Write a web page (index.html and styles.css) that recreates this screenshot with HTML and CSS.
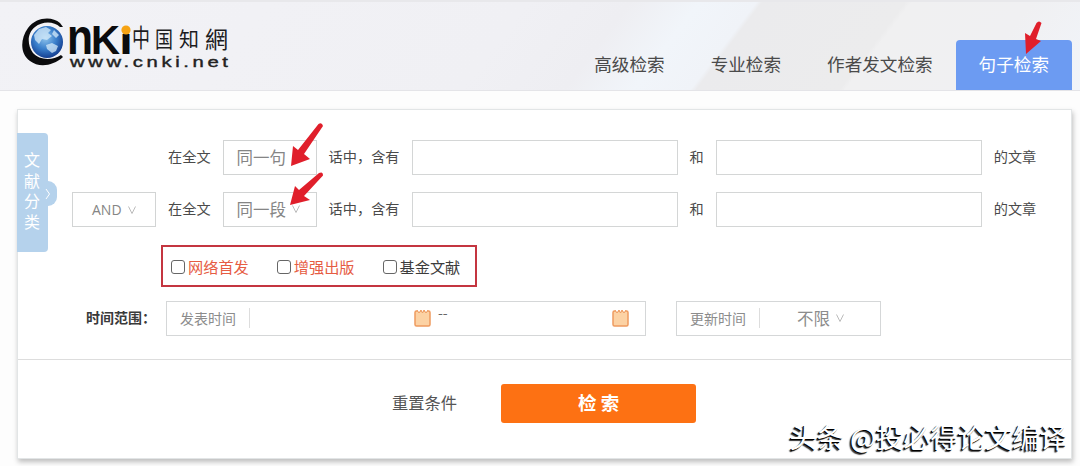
FILE: index.html
```html
<!DOCTYPE html>
<html lang="zh-CN">
<head>
  <meta charset="UTF-8" />
  <meta name="viewport" content="width=device-width, initial-scale=1.0"/>
  <title>句子检索 - 中国知网</title>
  <link rel="stylesheet" href="styles.css">
</head>
<body>
  <header class="header">
    <svg class="logo" width="212" height="52" viewBox="0 0 212 52" role="img" aria-label="中国知网">
      <defs>
        <radialGradient id="globe" cx="45%" cy="38%" r="62%">
          <stop offset="0" stop-color="#8fc4ec"/>
          <stop offset=".55" stop-color="#3a7fcb"/>
          <stop offset="1" stop-color="#153f91"/>
        </radialGradient>
      </defs>
      <path fill="#0b0b0d" d="M41 9L38 5C30-2 14-1 6 10C-2 21-2 36 8 43C17 50 31 48 41 39L39 37C30 43 17 42 11 35C5 27 5 15 13 9C20 3 32 3 38 9Z"/>
      <circle cx="25" cy="24" r="16" fill="url(#globe)"/>
      <path fill="#d5ebf9" opacity=".75" d="M12 17l5-6 7-2 5 3-3 3 4 3-5 4-5-1-3 5-4-4zM24 27l6-2 6 3-2 5-4 2-5-4zM32 12l5 5-3 3-4-4z"/>
      <g class="logo-name">
        <text x="45" y="36" font-size="50" textLength="26" lengthAdjust="spacingAndGlyphs">n</text>
        <text x="69" y="36" font-size="40" textLength="29" lengthAdjust="spacingAndGlyphs">K</text>
        <text x="97" y="36" font-size="36" textLength="14" lengthAdjust="spacingAndGlyphs">ı</text>
      </g>
      <circle cx="104" cy="12" r="4.600" fill="#f6a313"/>
      <g class="logo-cn">
        <text x="110" y="29" font-size="25" textLength="18" lengthAdjust="spacingAndGlyphs">中</text>
        <text x="133" y="29" font-size="22" textLength="18" lengthAdjust="spacingAndGlyphs">国</text>
        <text x="157" y="29" font-size="20">知</text>
        <text x="183" y="30" font-size="23">網</text>
      </g>
      <text class="logo-url" transform="translate(48 49) scale(1.35 1)" textLength="117" lengthAdjust="spacing">www.cnki.net</text>
    </svg>
    <nav class="tabs">
      <a class="tab">高级检索</a>
      <a class="tab">专业检索</a>
      <a class="tab">作者发文检索</a>
      <a class="tab active">句子检索</a>
    </nav>
    <svg class="arrow arrow-tab" width="18" height="36" viewBox="0 0 18 36">
      <path d="M0 13L5 16L11.500 3Q14 0 16.500 3L11 19L16 21L1 34Z"/>
    </svg>
  </header>

  <main class="panel">
    <div class="side-tab">
      <span>文献分类</span>
      <i class="side-knob"><svg width="8" height="12" viewBox="0 0 8 12"><path d="M2 1l3.500 5L2 11"/></svg></i>
    </div>

    <div class="search-rows">
      <div class="row">
        <span class="op-space"></span>
        <span class="word">在全文</span>
        <div class="select scope">同一句<svg class="arrow arrow-row" width="34" height="46" viewBox="0 0 34 46">
          <path d="M3 24L8 28L28.500 2Q32 0 33 4L14 32L20 37L1 44Z"/>
        </svg></div>
        <span class="word">话中，含有</span>
        <input type="text">
        <span class="word">和</span>
        <input type="text">
        <span class="word">的文章</span>
      </div>
      <div class="row">
        <div class="select op">AND<svg class="chev" viewBox="0 0 8 8"><path d="M.5.5L4 7.500L7.500.5"/></svg></div>
        <span class="word">在全文</span>
        <div class="select scope">同一段<svg class="chev" viewBox="0 0 8 8"><path d="M.5.5L4 7.500L7.500.5"/></svg><svg class="arrow arrow-row low" width="34" height="36" viewBox="0 0 34 36">
          <path d="M5 15L9 19L29 2Q33 0 33 4.500L14 25L20 29L0 34Z"/>
        </svg></div>
        <span class="word">话中，含有</span>
        <input type="text">
        <span class="word">和</span>
        <input type="text">
        <span class="word">的文章</span>
      </div>
    </div>

    <div class="checks">
      <label class="hot"><input type="checkbox">网络首发</label>
      <label class="hot"><input type="checkbox">增强出版</label>
      <label><input type="checkbox">基金文献</label>
    </div>

    <div class="time-row">
      <span class="time-label">时间范围：</span>
      <div class="field publish">
        <span class="field-name">发表时间</span>
        <span class="date"></span>
        <svg class="cal" viewBox="0 0 17 18"><rect x="1" y="2" width="15" height="15" rx="1.500"/><path d="M3 1l2 3 2-3M7 1l1.500 3L10 1M10 1l2 3 2-3"/></svg>
        <span class="dash">--</span>
        <span class="date"></span>
        <svg class="cal" viewBox="0 0 17 18"><rect x="1" y="2" width="15" height="15" rx="1.500"/><path d="M3 1l2 3 2-3M7 1l1.500 3L10 1M10 1l2 3 2-3"/></svg>
      </div>
      <div class="field update">
        <span class="field-name">更新时间</span>
        <span class="limit">不限<svg class="chev" viewBox="0 0 8 8"><path d="M.5.5L4 7.500L7.500.5"/></svg></span>
      </div>
    </div>

    <div class="actions">
      <a class="reset">重置条件</a>
      <button class="search">检 索</button>
    </div>
  </main>

  <div class="watermark">头条 @投必得论文编译</div>
</body>
</html>
```

FILE: styles.css
```css
* {
  box-sizing: border-box;
}
body {
  margin: 0;
  height: 466px;
  overflow: hidden;
  position: relative;
  background: #fdfdfd;
  color: #4a4a4a;
  font: 14px/20px "Noto Sans CJK SC", sans-serif;
}
.header {
  position: relative;
  display: flex;
  justify-content: space-between;
  height: 91px;
  padding: 18px 8px 0 22px;
  border-top: 2px solid #e8e8eb;
  border-bottom: 1px solid #e4e4e8;
  background: linear-gradient(127deg, #f2f2f6 0%, #f0f0f4 46%, #eeeef2 55%, #f1f5fa 61%, #f0f3f8 66%, #ebebed 66.500%, #ececed 79%, #f0f0f1 79.500%, #f0f0f2 90%, #f1f4f9 100%);
}
.logo {
  margin-top: -2px;
}
.logo-name {
  font-family: "Liberation Sans", sans-serif;
  font-weight: bold;
  fill: #0b0b0d;
}
.logo-cn {
  font-family: "Noto Sans CJK TC", sans-serif;
  fill: #1c1c1e;
}
.logo-url {
  font: 15px "Liberation Sans", sans-serif;
  fill: #222;
  stroke: #222;
  stroke-width: .4;
}
.tabs {
  display: flex;
  align-items: flex-end;
}
.tab {
  height: 50px;
  padding: 0 23px;
  font-size: 17.600px;
  line-height: 48px;
  color: #4a4a4a;
}
.tab.active {
  border-radius: 4px 4px 0 0;
  background: #6c9bf2;
  color: #fff;
}
.arrow {
  position: absolute;
  fill: #e01f2b;
}
.arrow-tab {
  left: 1025px;
  top: 18px;
}

.panel {
  position: relative;
  width: 1055px;
  height: 350px;
  margin: 18px 0 0 17px;
  padding-top: 30px;
  border: 1px solid #e2e5e6;
  background: #fff;
  box-shadow: 1px 3px 5px rgba(0, 0, 0, .25);
}
.side-tab {
  position: absolute;
  left: -1px;
  top: 23px;
  width: 31px;
  height: 119px;
  padding: 16px 7px 0;
  border-radius: 0 4px 4px 0;
  background: #b5d2ec;
  color: #fff;
  font-size: 16px;
  line-height: 20.500px;
}
.side-knob {
  position: absolute;
  left: 31px;
  top: 48px;
  width: 9px;
  height: 25px;
  border-radius: 0 13px 13px 0;
  background: #b5d2ec;
}
.side-knob svg {
  position: absolute;
  left: -4px;
  top: 7px;
  fill: none;
  stroke: #fff;
}
.search-rows {
  display: grid;
  gap: 17px;
  padding-left: 54px;
}
.row {
  display: flex;
  align-items: center;
  gap: 12px;
  height: 35px;
}
.word {
  padding-bottom: 4px;
  font-size: 14.200px;
}
.row input {
  width: 266px;
  height: 35px;
  border: 1px solid #d4d6d6;
  background: #fff;
}
.select {
  position: relative;
  display: flex;
  align-items: center;
  height: 35px;
  padding-bottom: 2px;
  border: 1px solid #d2d4d4;
  color: #858585;
}
.op-space, .op {
  width: 84px;
}
.op {
  padding: 1px 0 0 19px;
  font-family: "Open Sans", sans-serif;
}
.scope {
  width: 94px;
  padding-left: 13px;
  font-size: 16.500px;
}
.chev {
  width: 8px;
  height: 8px;
  margin-left: 6px;
  fill: none;
  stroke: #bbb;
}
.arrow-row {
  left: 66px;
  top: -19px;
}
.arrow-row.low {
  top: -22px;
}

.checks {
  display: flex;
  align-items: center;
  gap: 28px;
  width: 316px;
  height: 42px;
  margin: 18px 0 0 143px;
  padding-left: 8px;
  border: 2px solid #c43540;
  font-size: 15.200px;
  line-height: 18px;
}
.checks label {
  display: flex;
  align-items: center;
  color: #3c3c3c;
}
.checks .hot {
  color: #e65c43;
}
.checks input {
  appearance: none;
  width: 14px;
  height: 14px;
  margin: 1px 3px 0 0;
  border: 1px solid #666;
  border-radius: 3px;
  background: #fff;
}

.time-row {
  display: flex;
  align-items: center;
  margin-top: 14px;
  padding-left: 68px;
}
.time-label {
  width: 80px;
  padding-bottom: 3px;
  font-weight: bold;
  white-space: nowrap;
  color: #3a3a3a;
}
.field {
  display: flex;
  align-items: center;
  height: 35px;
  padding-bottom: 2px;
  border: 1px solid #d5d7d8;
  color: #8c8c8c;
}
.publish {
  width: 480px;
}
.update {
  width: 205px;
  margin-left: 30px;
}
.field-name {
  width: 83px;
  padding-left: 13px;
  border-right: 1px solid #ddd;
  line-height: 20px;
}
.date {
  width: 164px;
}
.cal {
  width: 17px;
  height: 18px;
  fill: #fcd2a4;
  stroke: #ee9b5f;
  stroke-width: 1.500;
  stroke-linejoin: round;
}
.cal path {
  fill: #fff;
  stroke-width: 1;
}
.dash {
  width: 17px;
  padding: 0 0 12px 7px;
  color: #666;
}
.limit {
  display: flex;
  align-items: center;
  margin-left: 37px;
  font-size: 16.500px;
}

.actions {
  display: flex;
  align-items: center;
  gap: 44px;
  height: 88px;
  margin-top: 23px;
  padding-left: 374px;
  border-top: 1px solid #ddd;
}
.reset {
  padding-bottom: 4px;
  font-size: 16.300px;
  color: #555;
}
.search {
  width: 195px;
  height: 39px;
  padding: 0 0 3px;
  border: none;
  border-radius: 3px;
  background: #fd7113;
  color: #fff;
  font: bold 18.500px/36px "Noto Sans CJK SC", sans-serif;
}
.watermark {
  position: absolute;
  right: 13px;
  top: 416px;
  font-size: 27.300px;
  line-height: 40px;
  white-space: nowrap;
  color: #fff;
  text-shadow: -1px 1px 0 #000, -2px 2px 1px #333;
}
```
